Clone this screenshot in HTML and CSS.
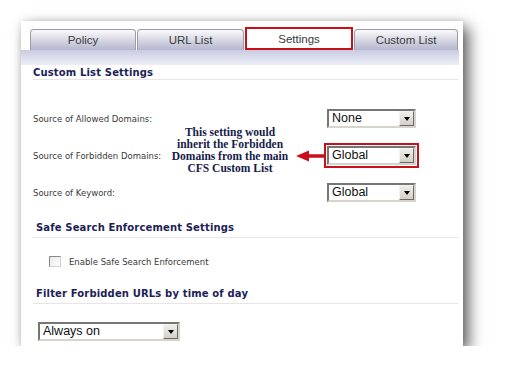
FILE: index.html
```html
<!DOCTYPE html>
<html>
<head>
<meta charset="utf-8">
<link rel="stylesheet" href="styles.css">
</head>
<body>
<div class="panel">
  <div class="tabs">
    <div class="tab">Policy</div>
    <div class="tab">URL List</div>
    <div class="tab active">Settings</div>
    <div class="tab">Custom List</div>
  </div>
  <div class="band"></div>

  <h2 class="heading first">Custom List Settings</h2>
  <div class="rows">
    <div class="row">
      <span class="label">Source of Allowed Domains:</span>
      <div class="select"><span class="val">None</span><span class="btn"><i class="tri"></i></span></div>
    </div>
    <div class="row callout">
      <span class="label">Source of Forbidden Domains:</span>
      <div class="select marked"><span class="val">Global</span><span class="btn"><i class="tri"></i></span></div>
      <div class="note">This setting would<br>inherit the Forbidden<br>Domains from the main<br>CFS Custom List</div>
      <svg class="arrow" width="29" height="12" viewBox="0 0 29 12"><polygon points="0,6 13,0.5 13,4.2 29,4.2 29,7.8 13,7.8 13,11.5" fill="#c8101a"/></svg>
    </div>
    <div class="row">
      <span class="label">Source of Keyword:</span>
      <div class="select"><span class="val">Global</span><span class="btn"><i class="tri"></i></span></div>
    </div>
  </div>

  <h2 class="heading sub">Safe Search Enforcement Settings</h2>
  <div class="check"><span class="box"></span><span class="label">Enable Safe Search Enforcement</span></div>

  <h2 class="heading sub third">Filter Forbidden URLs by time of day</h2>
  <div class="select wide"><span class="val">Always on</span><span class="btn"><i class="tri"></i></span></div>
</div>
</body>
</html>
```

FILE: styles.css
```css
html, body {
  margin: 0;
  padding: 0;
  background: #fff;
}

.panel {
  margin: 21px 0 0 21px;
  width: 442px;
  height: 325px;
  box-sizing: border-box;
  background: #fff;
  box-shadow: 6px 6px 14px rgba(0, 0, 0, 0.6), 0 0 6px rgba(0, 0, 0, 0.12);
  padding-top: 8px;
}

.tabs {
  display: flex;
  height: 21px;
  padding-left: 9px;
  gap: 1px;
  align-items: flex-start;
}

.tab {
  box-sizing: border-box;
  height: 21px;
  width: 106px;
  border: 1px solid #9c9ca8;
  border-bottom: none;
  border-radius: 4px 4px 0 0;
  background: linear-gradient(#fbfbfc, #e2e2ea 35%, #b4b6ce);
  font-family: "Liberation Sans", Arial, sans-serif;
  font-size: 11.5px;
  color: #3a3a3a;
  display: flex;
  align-items: center;
  justify-content: center;
  padding-bottom: 1px;
}

.tab:nth-child(2) { width: 107px; }
.tab:nth-child(4) { width: 104px; }

.tab.active {
  position: relative;
  z-index: 1;
  width: 108px;
  height: 23px;
  margin-top: -2px;
  border: 2px solid #c8101a;
  border-radius: 0;
  background: #fff;
  padding-bottom: 0;
}

.band {
  width: 438px;
  height: 15px;
  background: linear-gradient(#c9cce2, #eceef7);
}

.heading {
  margin: 2px 0 0 12px;
  width: 425px;
  font-family: "DejaVu Sans", Verdana, sans-serif;
  font-weight: bold;
  font-size: 10px;
  line-height: 11px;
  letter-spacing: 0.15px;
  color: #1c2257;
  padding-bottom: 1px;
  border-bottom: 1px solid #e6e6e6;
}

.heading.sub {
  margin-top: 11px;
  padding-left: 3px;
  width: 422px;
  padding-bottom: 4px;
}

.heading.third {
  margin-top: 21px;
}

.rows {
  margin-top: 20px;
  padding-left: 12px;
}

.row {
  position: relative;
  display: grid;
  grid-template-columns: 294px auto;
  align-items: center;
  height: 37px;
}

.label {
  font-family: "DejaVu Sans", Tahoma, sans-serif;
  font-size: 8.5px;
  color: #3a3a3a;
}

.select {
  box-sizing: border-box;
  display: flex;
  width: 89px;
  height: 19px;
  border: 2px solid;
  border-color: #767676 #d8d4cc #d8d4cc #767676;
  background: #fff;
}

.select .val {
  flex: 1;
  padding-left: 3px;
  font-family: "Liberation Sans", Arial, sans-serif;
  font-size: 12.5px;
  line-height: 15px;
  color: #111;
}

.select .btn {
  box-sizing: border-box;
  width: 15px;
  height: 15px;
  background: linear-gradient(#f0eeea, #d4d0c8);
  border: 1px solid;
  border-color: #f4f2ee #6a6a6a #6a6a6a #f4f2ee;
  display: flex;
  align-items: center;
  justify-content: center;
}

.tri {
  width: 0;
  height: 0;
  border-left: 3.5px solid transparent;
  border-right: 3.5px solid transparent;
  border-top: 4px solid #000;
  margin-top: 1px;
}

.select.marked {
  outline: 2px solid #c8101a;
  outline-offset: 1px;
}

.note {
  position: absolute;
  left: 124px;
  top: -11px;
  width: 146px;
  text-align: center;
  font-family: "Liberation Serif", "Times New Roman", serif;
  font-weight: bold;
  font-size: 11.5px;
  line-height: 12px;
  color: #161b4a;
}

.arrow {
  position: absolute;
  left: 263px;
  top: 13px;
}

.check {
  display: flex;
  align-items: center;
  gap: 8px;
  margin: 17px 0 0 28px;
  height: 12px;
}

.check .box {
  box-sizing: border-box;
  width: 12px;
  height: 11px;
  border: 1px solid;
  border-color: #8a8a8a #d0d0d0 #d0d0d0 #8a8a8a;
  background: linear-gradient(135deg, #e8e8e8, #fff);
}

.check .label {
  padding-top: 2px;
}

.select.wide {
  width: 142px;
  margin: 18px 0 0 17px;
}
```
